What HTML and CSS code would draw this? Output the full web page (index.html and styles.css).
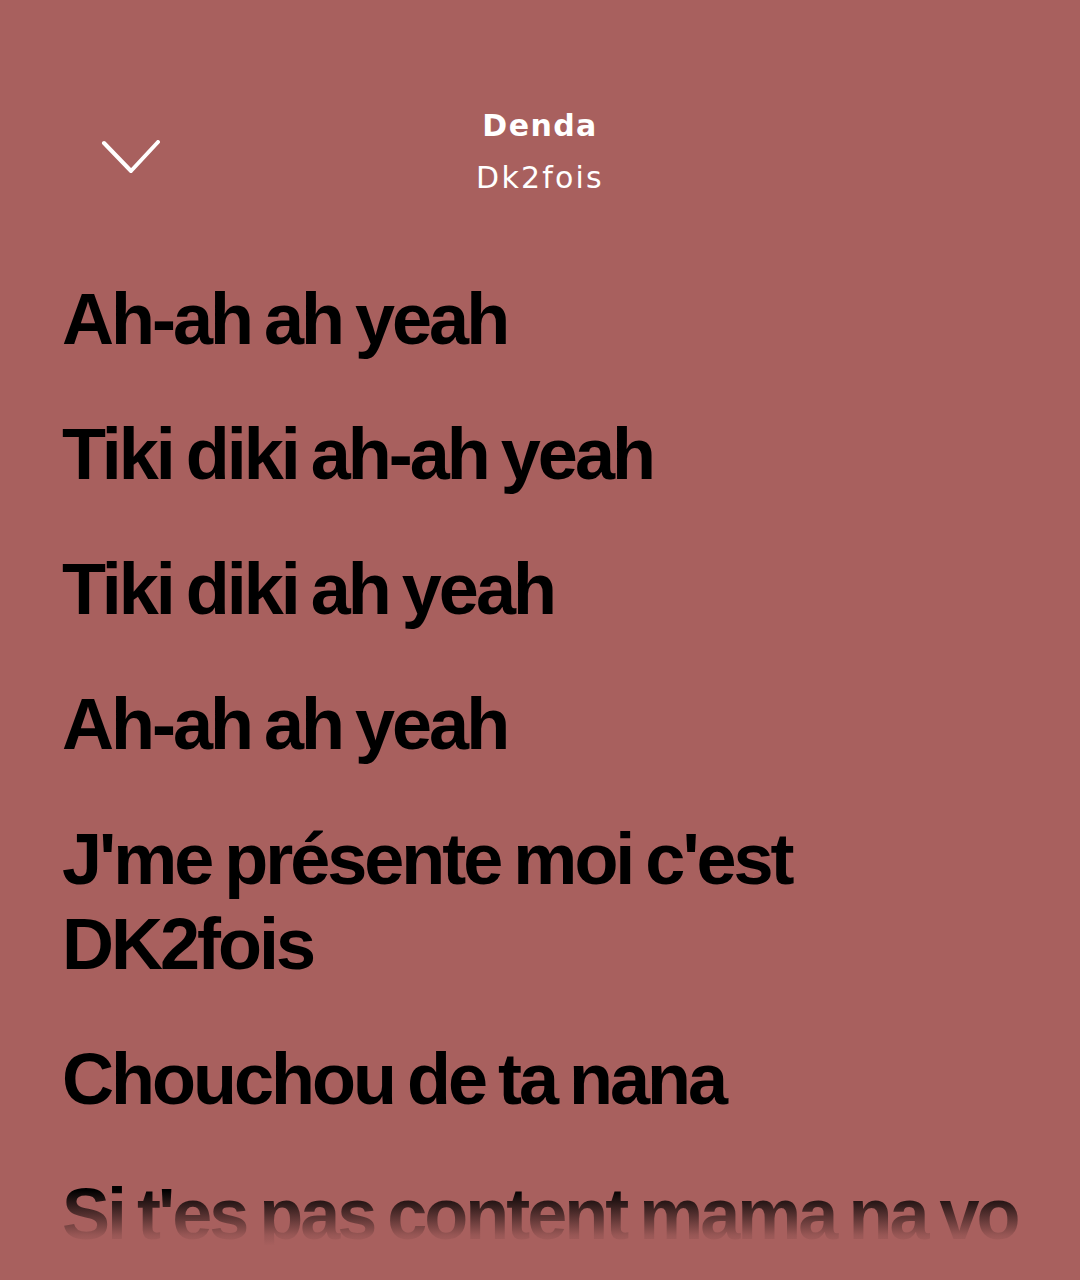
FILE: index.html
```html
<!DOCTYPE html>
<html lang="fr">
<head>
    <meta charset="UTF-8">
    <meta name="viewport" content="width=device-width, initial-scale=1.0">
    <title>Denda - Dk2fois</title>
    <link rel="stylesheet" href="styles.css">
</head>
<body>
    <div class="screen">
        <header class="top-bar">
            <button class="close-btn" aria-label="Fermer">
                <svg width="60" height="36" viewBox="0 0 60 36">
                    <path d="M3 3 L30 31 L57 2" fill="none" stroke="#fff" stroke-width="4" stroke-linecap="round" stroke-linejoin="round"/>
                </svg>
            </button>
            <div class="track">
                <div class="track-title">Denda</div>
                <div class="track-artist">Dk2fois</div>
            </div>
            <div></div>
        </header>

        <main class="lyrics">
            <p class="line">Ah-ah ah yeah</p>
            <p class="line">Tiki diki ah-ah yeah</p>
            <p class="line">Tiki diki ah yeah</p>
            <p class="line">Ah-ah ah yeah</p>
            <p class="line">J'me présente moi c'est DK2fois</p>
            <p class="line">Chouchou de ta nana</p>
            <p class="line">Si t'es pas content mama na vo</p>
        </main>
        <div class="fade"></div>
    </div>
</body>
</html>
```

FILE: styles.css
```css
* {
    margin: 0;
    padding: 0;
    box-sizing: border-box;
}

body {
    background-color: #a8605e;
    font-family: "Liberation Sans", Arial, sans-serif;
    overflow: hidden;
}

.screen {
    position: relative;
    width: 1080px;
    height: 1280px;
    overflow: hidden;
}

.top-bar {
    display: grid;
    grid-template-columns: 1fr auto 1fr;
    align-items: center;
    padding-top: 108px;
}

.close-btn {
    justify-self: start;
    margin-left: 101px;
    margin-top: 12px;
    background: none;
    border: none;
    display: flex;
}

.track {
    display: flex;
    flex-direction: column;
    align-items: center;
    gap: 16px;
    color: #fff;
    font-family: "DejaVu Sans", "Liberation Sans", sans-serif;
}

.track-title {
    font-size: 30px;
    line-height: 36px;
    font-weight: 700;
    letter-spacing: 1.4px;
}

.track-artist {
    font-size: 30px;
    line-height: 36px;
    letter-spacing: 2.2px;
}

.lyrics {
    margin-top: 81px;
    padding: 0 40px 0 62px;
    display: flex;
    flex-direction: column;
    gap: 50px;
}

.line {
    font-size: 72px;
    line-height: 85px;
    font-weight: 700;
    letter-spacing: -3px;
    word-spacing: -4px;
    color: #000;
}

.fade {
    position: absolute;
    left: 0;
    right: 0;
    bottom: 0;
    height: 90px;
    background: linear-gradient(to bottom, rgba(168, 96, 94, 0) 0%, rgba(168, 96, 94, 0.9) 50%, #a8605e 62%);
}
```
